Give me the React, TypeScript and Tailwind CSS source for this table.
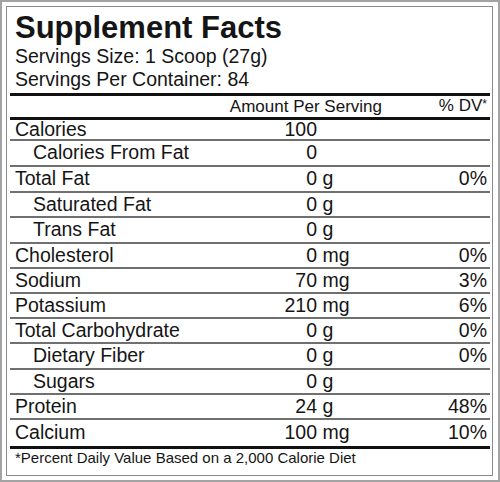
const rows = [
  { label: 'Calories', num: '100', unit: '', dv: '', indent: false, h: 'h-[19px]' },
  { label: 'Calories From Fat', num: '0', unit: '', dv: '', indent: true, h: 'h-[24px]' },
  { label: 'Total Fat', num: '0', unit: 'g', dv: '0%', indent: false, h: 'h-[24px]' },
  { label: 'Saturated Fat', num: '0', unit: 'g', dv: '', indent: true, h: 'h-[23px]' },
  { label: 'Trans Fat', num: '0', unit: 'g', dv: '', indent: true, h: 'h-[24px]' },
  { label: 'Cholesterol', num: '0', unit: 'mg', dv: '0%', indent: false, h: 'h-[23px]' },
  { label: 'Sodium', num: '70', unit: 'mg', dv: '3%', indent: false, h: 'h-[23px]' },
  { label: 'Potassium', num: '210', unit: 'mg', dv: '6%', indent: false, h: 'h-[23px]' },
  { label: 'Total Carbohydrate', num: '0', unit: 'g', dv: '0%', indent: false, h: 'h-[23px]' },
  { label: 'Dietary Fiber', num: '0', unit: 'g', dv: '0%', indent: true, h: 'h-[24px]' },
  { label: 'Sugars', num: '0', unit: 'g', dv: '', indent: true, h: 'h-[23px]' },
  { label: 'Protein', num: '24', unit: 'g', dv: '48%', indent: false, h: 'h-[23px]' },
  { label: 'Calcium', num: '100', unit: 'mg', dv: '10%', indent: false, h: 'h-[26px]' },
]

export default function App() {
  return (
    <div
      className="w-[500px] h-[482px] bg-white border-2 border-[#a3a3a3] pl-[4px] pt-[4px] pr-[5px] pb-[4px] text-[#151515]"
      style={{ fontFamily: '"Liberation Sans", Arial, Helvetica, sans-serif' }}
    >
      <div className="h-full border border-[#8a8a8a] pl-[3px] pr-[2px] pt-[4px]">
        {/* Header */}
        <div className="pl-[5px]">
          <h1 className="text-[31px] leading-[34px] font-bold">Supplement Facts</h1>
          <p className="text-[19.5px] leading-[23px]">Servings Size: 1 Scoop (27g)</p>
          <p className="text-[19.5px] leading-[23px]">Servings Per Container: 84</p>
        </div>

        <div className="mt-[2px] h-[3px] bg-[#111]" />

        <div className="flex h-[21px] items-center text-[17px] leading-[21px]">
          <div className="w-[372px] text-right">Amount Per Serving</div>
          <div className="flex-1 pr-[3px] text-right">
            % DV<span className="relative -top-[3px] text-[12px]">*</span>
          </div>
        </div>

        <div className="h-[3px] bg-[#111]" />

        {/* Nutrient rows */}
        {rows.map((r, i) => (
          <div
            key={r.label}
            className={`flex items-center text-[19.5px] leading-none ${r.h} ${
              i < rows.length - 1 ? 'border-b-2 border-[#707070]' : ''
            } box-content`}
          >
            <div className={`w-[250px] ${r.indent ? 'pl-[23px]' : 'pl-[5px]'}`}>{r.label}</div>
            <div className="w-[57px] text-right">{r.num}</div>
            <div className="w-[83px] pl-[5.5px]">{r.unit}</div>
            <div className="flex-1 pr-[3px] text-right">{r.dv}</div>
          </div>
        ))}

        <div className="h-[3px] bg-[#111]" />

        <p className="pl-[5px] text-[15px] leading-[18px]">*Percent Daily Value Based on a 2,000 Calorie Diet</p>
      </div>
    </div>
  )
}
